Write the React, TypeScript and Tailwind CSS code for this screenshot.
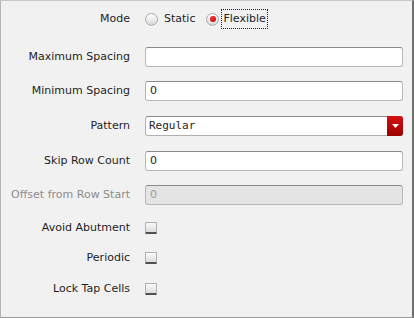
import React from "react";

const font = { fontFamily: '"DejaVu Sans", "Noto Sans", sans-serif' };

function Label({ children, disabled }: { children: React.ReactNode; disabled?: boolean }) {
  return (
    <div className={`w-[144px] shrink-0 pr-[15px] text-right text-[11px] leading-[20px] ${disabled ? "text-[#8c8c8c]" : "text-[#1e1e1e]"}`}>
      {children}
    </div>
  );
}

function TextBox({ value, disabled }: { value?: string; disabled?: boolean }) {
  return (
    <div
      className={`h-[20px] w-[258px] rounded-[3px] border border-[#b8b8b8] border-t-[#8a8a8a] px-[4px] text-[11px] leading-[18px] ${
        disabled ? "bg-[#e4e4e4] text-[#9a9a9a]" : "bg-white text-[#1e1e1e]"
      }`}
    >
      {value}
    </div>
  );
}

function Radio({ checked }: { checked?: boolean }) {
  return (
    <div className="flex h-[13px] w-[13px] items-center justify-center rounded-full border border-[#a8a8a8] bg-[linear-gradient(#ffffff,#d8d8d8)] shadow-[0_1px_0_#ffffff]">
      {checked && <div className="h-[6px] w-[6px] rounded-full bg-[radial-gradient(circle_at_40%_35%,#ff3030,#b00000)]" />}
    </div>
  );
}

function Check() {
  return (
    <div className="h-[12px] w-[12px] rounded-[1px] border border-[#b0b0b0] border-b-[2px] border-b-[#505050] bg-[linear-gradient(#fafafa,#dcdcdc)]" />
  );
}

export default function App() {
  return (
    <div
      style={font}
      className="h-[318px] w-[414px] border-l border-t border-b border-l-[#b4b4b4] border-t-[#c8c8c8] border-b-[#9a9a9a] border-r-2 border-r-[#707070] bg-[#f1f1f1]"
    >
      <div className="flex flex-col pt-[8px]">
        <div className="flex h-[20px] items-center">
          <Label>Mode</Label>
          <div className="flex items-center text-[11px] text-[#1e1e1e]">
            <Radio />
            <span className="ml-[6px]">Static</span>
            <div className="ml-[11px]">
              <Radio checked />
            </div>
            <span className="ml-[2px] border border-dotted border-[#202020] px-[1px] leading-[18px]">Flexible</span>
          </div>
        </div>

        <div className="mt-[18px] flex items-center">
          <Label>Maximum Spacing</Label>
          <TextBox />
        </div>
        <div className="mt-[14px] flex items-center">
          <Label>Minimum Spacing</Label>
          <TextBox value="0" />
        </div>
        <div className="mt-[15px] flex items-center">
          <Label>Pattern</Label>
          <div className="flex h-[20px] w-[258px] rounded-[3px] border border-[#b0b0b0] border-t-[#8a8a8a] bg-white">
            <div className="flex-1 pl-[3px] text-[11px] leading-[18px] text-[#1e1e1e]" style={{ fontFamily: '"DejaVu Sans Mono", monospace' }}>
              Regular
            </div>
            <div className="-my-px -mr-px flex w-[16px] items-center justify-center rounded-r-[3px] bg-[linear-gradient(#d41010,#9a0000)]">
              <svg width="7" height="4" viewBox="0 0 7 4">
                <path d="M0 0 L7 0 L3.5 4 Z" fill="#ffffff" />
              </svg>
            </div>
          </div>
        </div>
        <div className="mt-[15px] flex items-center">
          <Label>Skip Row Count</Label>
          <TextBox value="0" />
        </div>
        <div className="mt-[14px] flex items-center">
          <Label disabled>Offset from Row Start</Label>
          <TextBox value="0" disabled />
        </div>

        <div className="mt-[13px] flex h-[20px] items-center">
          <Label>Avoid Abutment</Label>
          <Check />
        </div>
        <div className="mt-[10px] flex h-[20px] items-center">
          <Label>Periodic</Label>
          <Check />
        </div>
        <div className="mt-[11px] flex h-[20px] items-center">
          <Label>Lock Tap Cells</Label>
          <Check />
        </div>
      </div>
    </div>
  );
}
